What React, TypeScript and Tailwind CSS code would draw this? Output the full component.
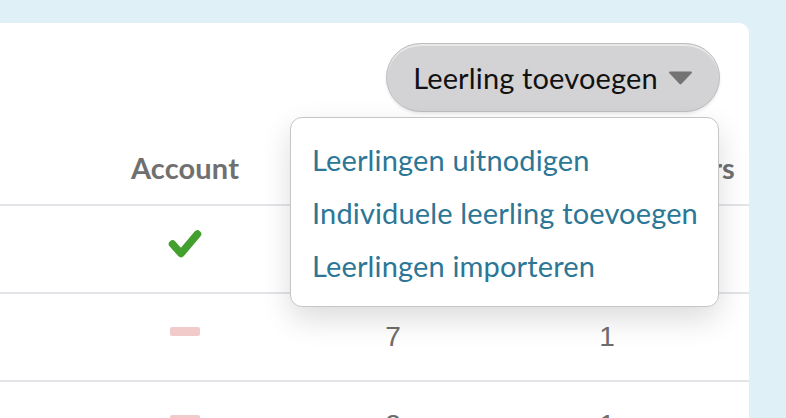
import { useState } from "react";

const rows = [
  { account: true, a: "", b: "" },
  { account: false, a: "7", b: "1" },
  { account: false, a: "2", b: "1" },
];

const menuItems = [
  "Leerlingen uitnodigen",
  "Individuele leerling toevoegen",
  "Leerlingen importeren",
];

function Check() {
  return (
    <svg width="34" height="30" viewBox="0 0 34 30" className="mb-[11px]">
      <polyline
        points="4.5,15 13,24.5 29.5,5"
        fill="none"
        stroke="#43a02e"
        strokeWidth="7.5"
        strokeLinecap="round"
        strokeLinejoin="round"
      />
    </svg>
  );
}

function Dash() {
  return <div className="mb-[12px] h-[9px] w-[30px] rounded-[2px] bg-[#f1caca]" />;
}

export default function App() {
  const [open] = useState(true);

  return (
    <div className="h-screen overflow-hidden bg-[#e0f0f7] pt-[23px] pr-[37px] font-['Lato',sans-serif] tracking-[0.15px]">
      <div className="relative h-[395px] rounded-tr-[10px] bg-white">
        {/* Toolbar */}
        <div className="flex justify-end pt-[20px] pr-[29px]">
          <button className="flex h-[69px] w-[334px] items-center justify-center gap-[10px] rounded-full border border-[#bdbdbd] bg-[#d3d3d5] text-[29px] text-[#111111] shadow-[inset_0_2px_0_rgba(255,255,255,0.5),0_2px_3px_rgba(0,0,0,0.08)]">
            <span>Leerling toevoegen</span>
            <svg width="25" height="15" viewBox="0 0 25 15">
              <path d="M2 1.5h21a1 1 0 0 1 .8 1.6l-10.5 11a1.2 1.2 0 0 1-1.7 0L1.2 3.1A1 1 0 0 1 2 1.5z" fill="#737373" />
            </svg>
          </button>
        </div>

        {/* Table */}
        <div className="grid grid-cols-[130px_110px_306px_122px_81px]">
          <div className="col-span-5 grid h-[94px] grid-cols-subgrid items-center border-b-2 border-[#e3e4e8] pt-[19px] text-[29px] font-bold text-[#707070]">
            <div />
            <div className="text-center">Account</div>
            <div />
            <div className="col-span-2 whitespace-nowrap pr-[14px] text-right">Begeleiders</div>
          </div>
          {rows.map((r, i) => (
            <div
              key={i}
              className="col-span-5 grid h-[88px] grid-cols-subgrid items-center border-b-2 border-[#e3e4e8] font-['Liberation_Sans',sans-serif] text-[28px] tracking-normal text-[#6d6d6d]"
            >
              <div />
              <div className="flex justify-center">{r.account ? <Check /> : <Dash />}</div>
              <div className="text-center">{r.a}</div>
              <div className="text-center">{r.b}</div>
              <div />
            </div>
          ))}
        </div>

        {/* Dropdown */}
        {open && (
          <div className="absolute right-[30px] top-[94px] w-[429px] rounded-[12px] border border-[#c6c6c6] bg-white pt-[15px] pb-[14px] pl-[21px] shadow-[0_12px_30px_rgba(0,0,0,0.14)]">
            {menuItems.map((m) => (
              <div key={m} className="flex h-[53px] items-center text-[29px] text-[#2c7696]">
                {m}
              </div>
            ))}
          </div>
        )}
      </div>
    </div>
  );
}
